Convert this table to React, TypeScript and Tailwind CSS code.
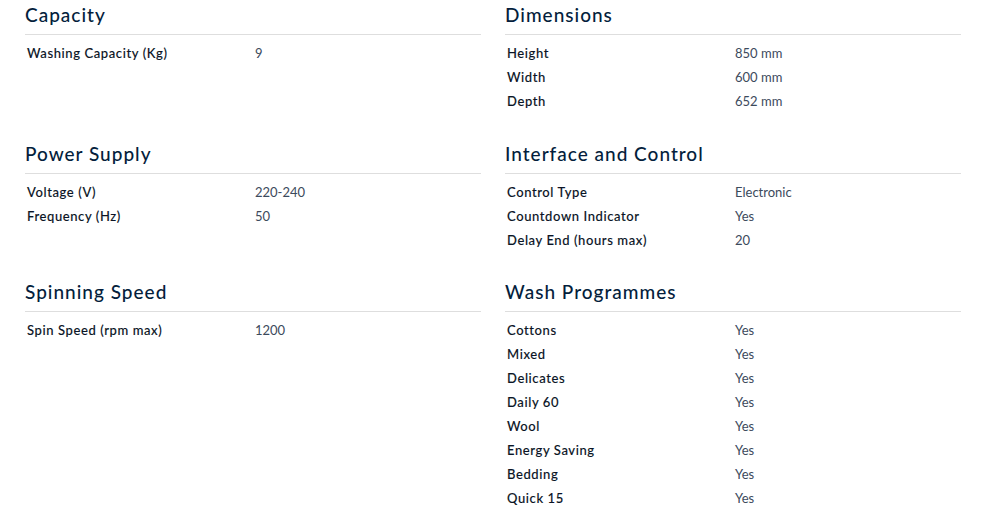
type Spec = { label: string; value: string }
type Section = { title: string; rows: Spec[] }

const sections: Section[] = [
  { title: 'Capacity', rows: [{ label: 'Washing Capacity (Kg)', value: '9' }] },
  {
    title: 'Dimensions',
    rows: [
      { label: 'Height', value: '850 mm' },
      { label: 'Width', value: '600 mm' },
      { label: 'Depth', value: '652 mm' },
    ],
  },
  {
    title: 'Power Supply',
    rows: [
      { label: 'Voltage (V)', value: '220-240' },
      { label: 'Frequency (Hz)', value: '50' },
    ],
  },
  {
    title: 'Interface and Control',
    rows: [
      { label: 'Control Type', value: 'Electronic' },
      { label: 'Countdown Indicator', value: 'Yes' },
      { label: 'Delay End (hours max)', value: '20' },
    ],
  },
  { title: 'Spinning Speed', rows: [{ label: 'Spin Speed (rpm max)', value: '1200' }] },
  {
    title: 'Wash Programmes',
    rows: [
      { label: 'Cottons', value: 'Yes' },
      { label: 'Mixed', value: 'Yes' },
      { label: 'Delicates', value: 'Yes' },
      { label: 'Daily 60', value: 'Yes' },
      { label: 'Wool', value: 'Yes' },
      { label: 'Energy Saving', value: 'Yes' },
      { label: 'Bedding', value: 'Yes' },
      { label: 'Quick 15', value: 'Yes' },
    ],
  },
]

function SpecSection({ section }: { section: Section }) {
  return (
    <div className="pt-[3px]">
      <h2 className="text-[19px] leading-[24px] font-medium text-[#041e3c] tracking-[1px] pb-[7px] border-b border-[#dedede]">
        {section.title}
      </h2>
      <dl className="mt-[7px]">
        {section.rows.map((row) => (
          <div key={row.label} className="flex h-[24px] items-center text-[13px]">
            <dt className="w-[230px] pl-[2px] font-medium tracking-[0.6px] text-[#0b1526] [-webkit-text-stroke:0.1px_#0b1526]">
              {row.label}
            </dt>
            <dd className="text-[#3c4a5c]">{row.value}</dd>
          </div>
        ))}
      </dl>
    </div>
  )
}

export default function App() {
  return (
    <div className="bg-white w-[983px] h-[505px] overflow-hidden font-['Lato','Noto_Sans',sans-serif]">
      <div className="grid grid-cols-2 gap-x-[24px] gap-y-[24.5px] pl-[25px] pr-[22px] items-start">
        {sections.map((s) => (
          <SpecSection key={s.title} section={s} />
        ))}
      </div>
    </div>
  )
}
